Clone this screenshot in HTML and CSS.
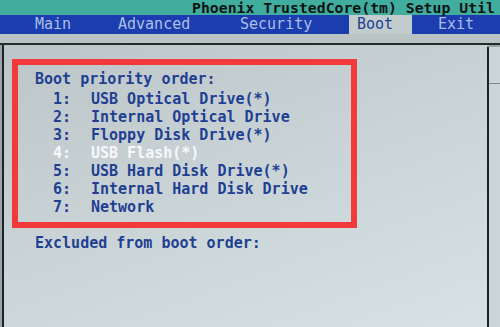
FILE: index.html
```html
<!DOCTYPE html>
<html lang="en">
<head>
    <meta charset="UTF-8">
    <meta name="viewport" content="width=device-width, initial-scale=1.0">
    <title>Phoenix TrustedCore Setup Utility - Boot</title>
    <link rel="stylesheet" href="styles.css">
</head>
<body>
    <header class="titlebar">Phoenix TrustedCore(tm) Setup Util</header>
    <nav>
        <ul class="tabs">
            <li class="tab-main">Main</li>
            <li class="tab-advanced">Advanced</li>
            <li class="tab-security">Security</li>
            <li class="tab-boot active">Boot</li>
            <li class="tab-exit">Exit</li>
        </ul>
    </nav>
    <div class="strip"></div>

    <main class="screen">
        <section class="panel">
            <div class="highlight">
                <h2 class="heading">Boot priority order:</h2>
                <ol class="boot-list">
                    <li><span class="num">1:</span><span>USB Optical Drive(*)</span></li>
                    <li><span class="num">2:</span><span>Internal Optical Drive</span></li>
                    <li><span class="num">3:</span><span>Floppy Disk Drive(*)</span></li>
                    <li class="selected"><span class="num">4:</span><span>USB Flash(*)</span></li>
                    <li><span class="num">5:</span><span>USB Hard Disk Drive(*)</span></li>
                    <li><span class="num">6:</span><span>Internal Hard Disk Drive</span></li>
                    <li><span class="num">7:</span><span>Network</span></li>
                </ol>
            </div>
            <h2 class="heading excluded">Excluded from boot order:</h2>
        </section>
        <aside class="side">
            <div class="side-top"></div>
        </aside>
    </main>
</body>
</html>
```

FILE: styles.css
```css
html, body {
    margin: 0;
    padding: 0;
}
body {
    width: 500px;
    height: 327px;
    overflow: hidden;
    font-family: 'DejaVu Sans Mono', 'Liberation Mono', monospace;
    background-color: #9aa4a6;
}
.titlebar {
    height: 15px;
    line-height: 16px;
    padding-left: 192px;
    background-color: #41ad9f;
    color: #0c1412;
    font-size: 14.8px;
    font-weight: bold;
    white-space: nowrap;
}
.tabs {
    list-style-type: none;
    margin: 0;
    padding: 0 0 0 27px;
    height: 19px;
    display: flex;
    background-color: #1b3db0;
}
.tabs li {
    padding-left: 8px;
    line-height: 19px;
    font-size: 15px;
    color: #aebfe4;
    white-space: nowrap;
}
.tab-main { width: 75px; }
.tab-advanced { width: 114px; }
.tab-security { width: 109px; }
.tab-boot { width: 55px; }
.tabs li.tab-exit { padding-left: 26px; }
.tabs li.active {
    background-color: #c2cccd;
    color: #1e3f94;
}
.strip {
    height: 9px;
    background-color: #b9c3c4;
    border-bottom: 2px solid #232b2d;
}
.screen {
    display: flex;
    height: 282px;
}
.panel {
    margin-left: 2px;
    width: 475px;
    border-left: 2px solid #1d2224;
    padding: 14px 0 0 8px;
    background: linear-gradient(160deg, #bcc6c9 0%, #c9d3d6 45%, #d6e2e4 100%);
}
.highlight {
    width: 316px;
    border: 6px solid #f23a3a;
    padding: 5px 0 6px 17px;
}
.heading {
    margin: 0;
    font-size: 15px;
    line-height: 18px;
    font-weight: bold;
    color: #1f3f92;
}
.boot-list {
    list-style-type: none;
    margin: 2px 0 0 0;
    padding: 0 0 0 18px;
}
.boot-list li {
    display: grid;
    grid-template-columns: 38px 1fr;
    font-size: 15px;
    line-height: 18px;
    font-weight: bold;
    color: #1f3f92;
    white-space: pre;
}
.boot-list li.selected {
    color: #f6f8fa;
}
.excluded {
    margin-top: 6px;
    padding-left: 23px;
}
.side {
    width: 11px;
    margin-top: 2px;
    border-left: 2px solid #1d2224;
    background-color: #ccd6d8;
}
.side-top {
    height: 36px;
    border-bottom: 1px solid #7d888b;
}
```
